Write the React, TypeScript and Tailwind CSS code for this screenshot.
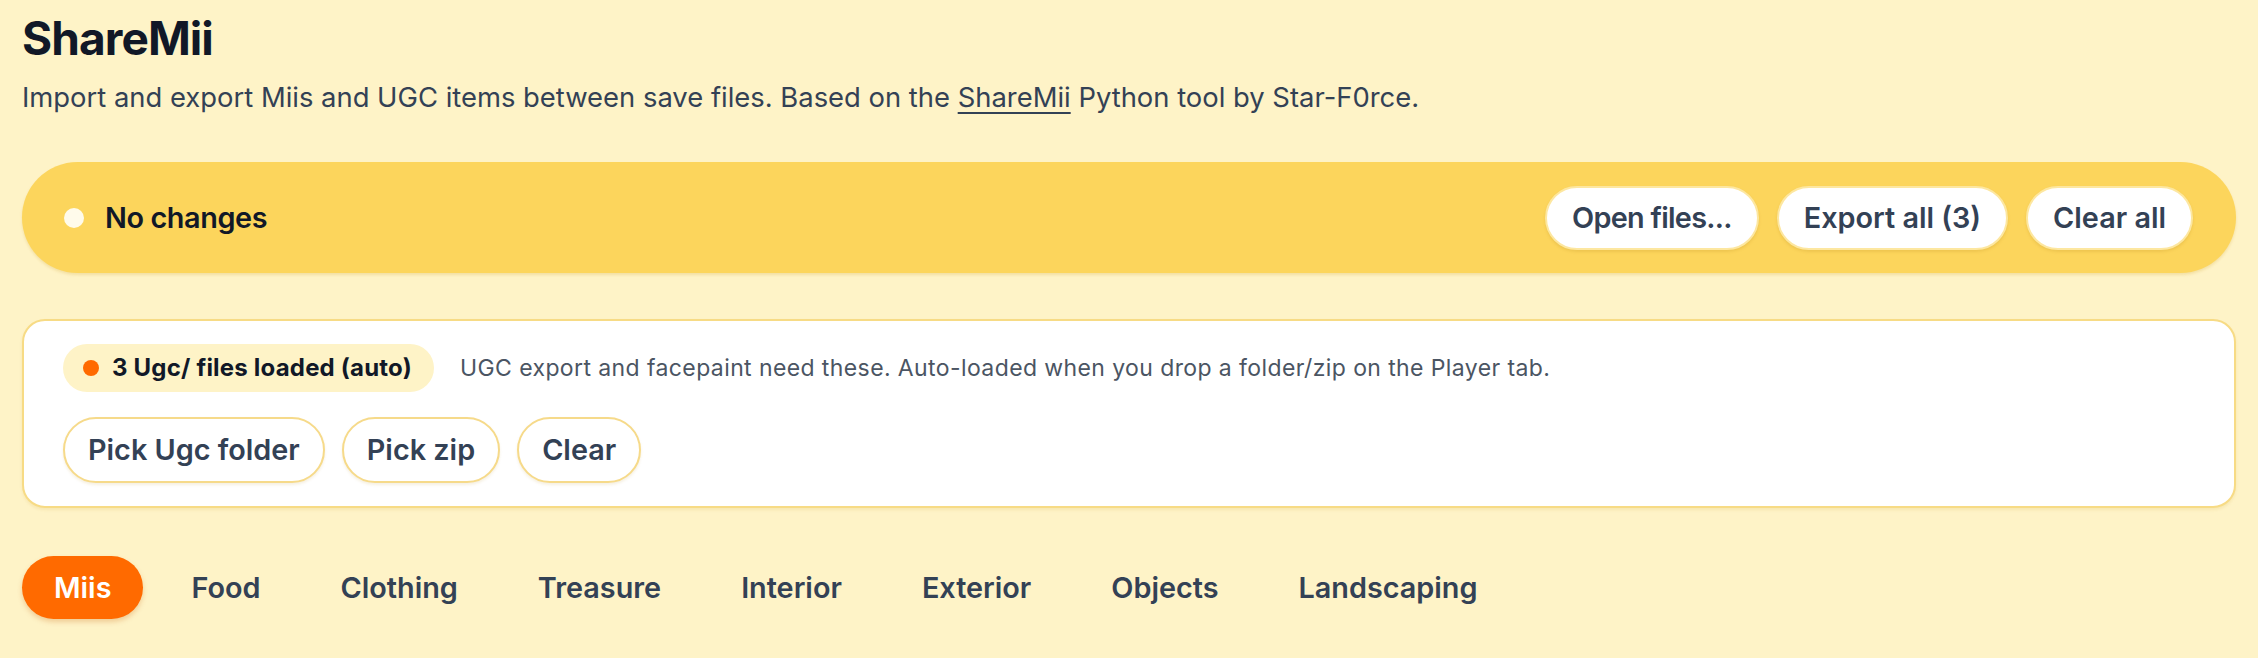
import React from "react";

const tabs = ["Miis", "Food", "Clothing", "Treasure", "Interior", "Exterior", "Objects", "Landscaping"];

function PillButton({ children, tight }: { children: React.ReactNode; tight?: boolean }) {
  return (
    <button
      className={
        tight
          ? "rounded-full border-2 border-[#fde7a0] bg-white px-[25px] py-[10px] text-[28.8px] leading-[40px] font-semibold tracking-[-0.7px] text-[#334155] shadow-[0_2px_3px_rgba(180,130,20,0.18)]"
          : "rounded-full border-2 border-[#fde7a0] bg-white px-[25px] py-[10px] text-[28.8px] leading-[40px] font-semibold text-[#334155] shadow-[0_2px_3px_rgba(180,130,20,0.18)]"
      }
    >
      {children}
    </button>
  );
}

function OutlineButton({ children }: { children: React.ReactNode }) {
  return (
    <button className="rounded-full border-2 border-[#f6da8a] bg-white px-[23px] py-[11px] text-[28.8px] leading-[40px] font-semibold text-[#334155] shadow-[0_2px_3px_rgba(180,130,20,0.12)]">
      {children}
    </button>
  );
}

export default function App() {
  return (
    <div className="min-h-screen bg-[#fef3c7] px-[22px] pt-[10px] pb-[30px] font-['Inter','Noto_Sans',sans-serif]">
      <h1 className="text-[46px] leading-[56px] font-bold tracking-[-0.02em] text-[#111827]">ShareMii</h1>
      <p className="mt-[11px] text-[27.4px] leading-[40px] text-[#334155]">
        Import and export Miis and UGC items between save files. Based on the{" "}
        <a className="underline underline-offset-[5px]">ShareMii</a> Python tool by Star-F0rce.
      </p>

      {/* status bar */}
      <div className="mt-[45px] flex items-center justify-between rounded-full bg-[#fcd55c] pl-[42px] pr-[43px] py-[23.5px] shadow-[0_2px_3px_rgba(200,150,20,0.2)]">
        <div className="flex items-center gap-[21px]">
          <span className="h-[20px] w-[20px] rounded-full bg-[#fffbeb]" />
          <span className="text-[28.8px] leading-[40px] font-semibold tracking-[-0.4px] text-[#111827]">No changes</span>
        </div>
        <div className="flex items-center gap-[18px]">
          <PillButton tight>Open files...</PillButton>
          <PillButton>Export all (3)</PillButton>
          <PillButton>Clear all</PillButton>
        </div>
      </div>

      {/* ugc panel */}
      <div className="mt-[46px] rounded-[23px] border-2 border-[#f7db85] bg-white px-[39px] py-[23px] shadow-[0_2px_3px_rgba(200,150,20,0.12)]">
        <div className="flex items-center gap-[26px]">
          <div className="flex items-center gap-[13px] rounded-full bg-[#fef3c7] pl-[20px] pr-[22px] py-[7px]">
            <span className="h-[16px] w-[16px] rounded-full bg-[#ff6a00]" />
            <span className="text-[24px] leading-[34px] font-bold tracking-[0.2px] text-[#111827]">3 Ugc/ files loaded (auto)</span>
          </div>
          <span className="text-[23px] leading-[34px] tracking-[0.4px] text-[#4b5563]">
            UGC export and facepaint need these. Auto-loaded when you drop a folder/zip on the Player tab.
          </span>
        </div>
        <div className="mt-[25px] flex items-center gap-[17px]">
          <OutlineButton>Pick Ugc folder</OutlineButton>
          <OutlineButton>Pick zip</OutlineButton>
          <OutlineButton>Clear</OutlineButton>
        </div>
      </div>

      {/* tabs */}
      <div className="mt-[48px] flex items-center gap-[16px]">
        {tabs.map((t, i) => (
          <button
            key={t}
            className={
              i === 0
                ? "rounded-full bg-[#ff6a00] px-[32px] py-[11.5px] text-[28.8px] leading-[40px] font-semibold text-white shadow-[0_3px_5px_rgba(200,90,0,0.25)]"
                : "rounded-full px-[32px] py-[11.5px] text-[28.8px] leading-[40px] font-semibold text-[#334155]"
            }
          >
            {t}
          </button>
        ))}
      </div>
    </div>
  );
}
